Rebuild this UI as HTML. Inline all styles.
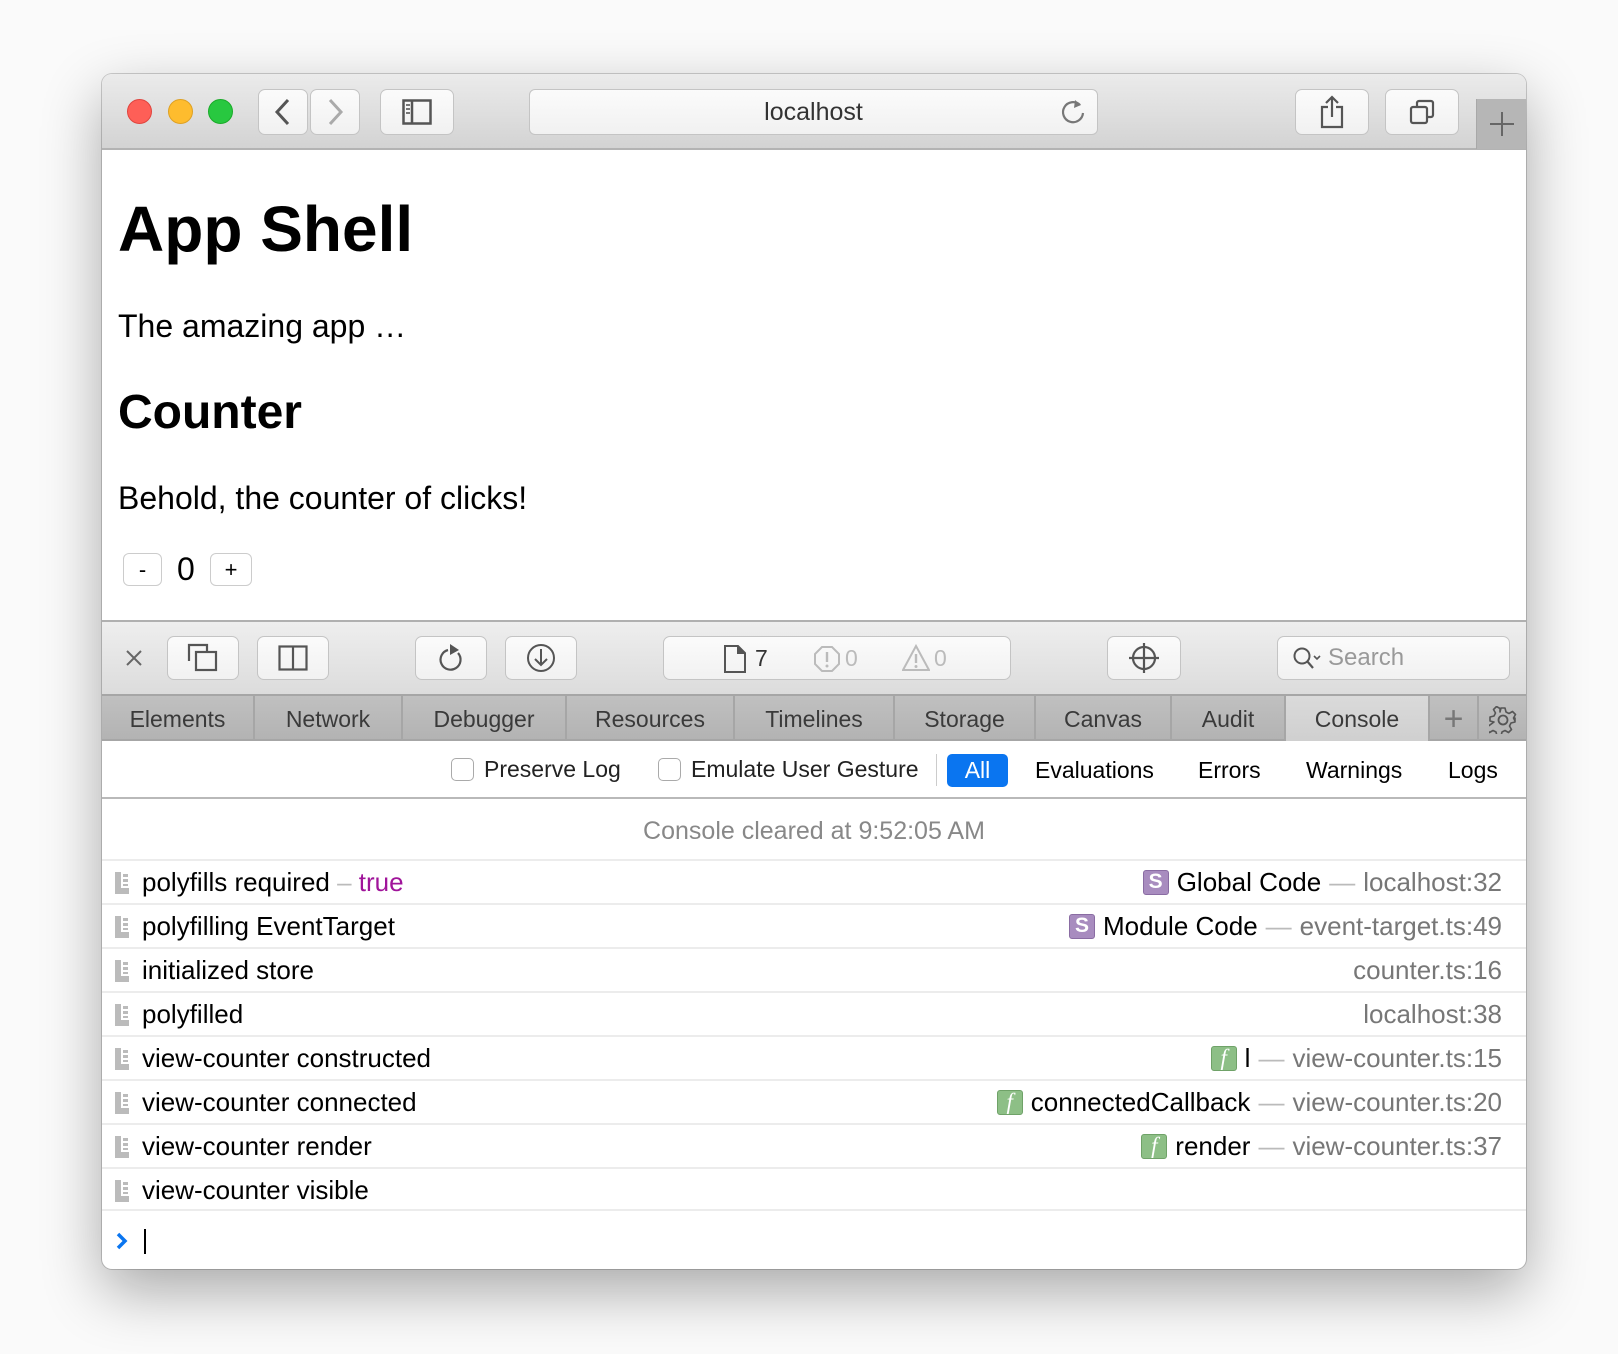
<!DOCTYPE html>
<html><head><meta charset="utf-8">
<style>
*{box-sizing:border-box;margin:0;padding:0}
body{width:1618px;height:1354px;background:#fafafa;font-family:"Liberation Sans",Arial,sans-serif;position:relative;overflow:hidden}
.a{position:absolute}
#win{left:102px;top:74px;width:1424px;height:1195px;background:#fff;border-radius:10px;box-shadow:0 22px 60px rgba(0,0,0,.33),0 0 0 1px rgba(0,0,0,.18);overflow:hidden}
.btn{position:absolute;background:linear-gradient(#fbfbfb,#f1f1f1);border:1px solid #c4c4c4;border-radius:7px;display:flex;align-items:center;justify-content:center}
.t{position:absolute;white-space:nowrap;line-height:1}
.tab{position:absolute;top:0;height:47px;display:flex;align-items:center;justify-content:center;font-size:23px;color:#3a3a3a;border-right:2px solid #a6a6a6}
.row{position:absolute;left:0;width:1424px;height:44px;border-top:2px solid #ececec;font-size:26px;color:#000}
.row .l{position:absolute;left:40px;top:0;line-height:42px}
.row .r{position:absolute;right:24px;top:0;line-height:42px;display:flex;align-items:center;gap:8px}
.row .ic{position:absolute;left:13px;top:11px}
.g{color:#777}
.dash{color:#bbb}
.bd{width:26px;height:25px;border-radius:3px;color:#fff;font-size:21px;display:inline-flex;align-items:center;justify-content:center;font-weight:bold}
.S{background:#a88cbf;border:1px solid #8a6ca3}
.F{background:#8dbf86;border:1px solid #6fa268;font-style:italic;font-family:"Liberation Serif",serif;font-weight:normal;font-size:23px}
.cb{position:absolute;width:23px;height:23px;border:1.5px solid #aaa;border-radius:5px;background:#fff}
</style></head><body>
<div id="win" class="a">
  <div class="a" style="left:0;top:0;width:1424px;height:76px;background:linear-gradient(#ebebeb,#d3d3d3);border-bottom:2px solid #b3b3b3"></div>
  <div class="a" style="left:25px;top:25px;width:25px;height:25px;border-radius:50%;background:#fe5f57;border:1px solid #e0443e"></div>
  <div class="a" style="left:66px;top:25px;width:25px;height:25px;border-radius:50%;background:#febc2e;border:1px solid #dea123"></div>
  <div class="a" style="left:106px;top:25px;width:25px;height:25px;border-radius:50%;background:#28c840;border:1px solid #1aab29"></div>
  <div class="btn" style="left:156px;top:15px;width:50px;height:46px"><svg width="20" height="30" viewBox="0 0 20 30"><path d="M15 3L4 15l11 12" fill="none" stroke="#555" stroke-width="3"/></svg></div>
  <div class="btn" style="left:208px;top:15px;width:50px;height:46px"><svg width="20" height="30" viewBox="0 0 20 30"><path d="M5 3l11 12L5 27" fill="none" stroke="#aaa" stroke-width="3"/></svg></div>
  <div class="btn" style="left:278px;top:15px;width:74px;height:46px"><svg width="30" height="26" viewBox="0 0 30 26"><rect x="1.5" y="1.5" width="27" height="23" fill="none" stroke="#555" stroke-width="2.5"/><path d="M10 1.5v23" stroke="#555" stroke-width="2.5"/><path d="M4 6h4M4 10h4M4 14h4" stroke="#777" stroke-width="2"/></svg></div>
  <div class="btn" style="left:427px;top:15px;width:569px;height:46px;border-radius:6px"><span style="font-size:25px;color:#333;margin-left:0px">localhost</span></div>
  <svg class="a" style="left:956px;top:23px" width="30" height="30" viewBox="0 0 30 30"><path d="M22 8A10 10 0 1 0 25 16" fill="none" stroke="#777" stroke-width="2.2"/><path d="M17 3l6 5-7 3z" fill="#777"/></svg>
  <div class="btn" style="left:1193px;top:15px;width:74px;height:46px"><svg width="26" height="34" viewBox="0 0 26 34"><path d="M9 12H3v20h20V12h-6" fill="none" stroke="#555" stroke-width="2.2"/><path d="M13 22V2M7 8l6-6 6 6" fill="none" stroke="#555" stroke-width="2.2"/></svg></div>
  <div class="btn" style="left:1283px;top:15px;width:74px;height:46px"><svg width="26" height="26" viewBox="0 0 26 26"><rect x="2" y="8" width="16" height="16" rx="2" fill="none" stroke="#555" stroke-width="2.2"/><path d="M8 8V4a2 2 0 0 1 2-2h12a2 2 0 0 1 2 2v12a2 2 0 0 1-2 2h-4" fill="none" stroke="#555" stroke-width="2.2"/></svg></div>
  <div class="a" style="left:1374px;top:25px;width:50px;height:50px;background:#b6b6b6;border-left:1px solid #a8a8a8"><svg width="50" height="50" viewBox="0 0 50 50"><path d="M25 13v24M13 25h24" stroke="#666" stroke-width="2"/></svg></div>

  <div class="t" style="left:16px;top:123px;font-size:64px;font-weight:bold">App Shell</div>
  <div class="t" style="left:16px;top:236px;font-size:32px">The amazing app …</div>
  <div class="t" style="left:16px;top:315px;font-size:48px;font-weight:bold">Counter</div>
  <div class="t" style="left:16px;top:408px;font-size:32px">Behold, the counter of clicks!</div>
  <div class="btn" style="left:21px;top:479px;width:39px;height:33px;border-radius:6px;font-size:22px;background:#fff;border-color:#ccc">-</div>
  <div class="t" style="left:75px;top:479px;font-size:32px;line-height:32px">0</div>
  <div class="btn" style="left:108px;top:479px;width:42px;height:33px;border-radius:6px;font-size:22px;background:#fff;border-color:#ccc">+</div>

  <div class="a" style="left:0;top:546px;width:1424px;height:74px;background:linear-gradient(#eeeeee,#dcdcdc);border-top:2px solid #b0b0b0"></div>
  <svg class="a" style="left:23px;top:575px" width="18" height="18" viewBox="0 0 18 18"><path d="M2 2l14 14M16 2L2 16" stroke="#666" stroke-width="2"/></svg>
  <div class="btn" style="left:65px;top:562px;width:72px;height:44px"><svg width="32" height="30" viewBox="0 0 32 30"><path d="M2 18V2h18v6" fill="none" stroke="#555" stroke-width="2.2"/><rect x="9" y="9" width="20" height="18" fill="none" stroke="#555" stroke-width="2.2"/></svg></div>
  <div class="btn" style="left:155px;top:562px;width:72px;height:44px"><svg width="30" height="26" viewBox="0 0 30 26"><rect x="1.5" y="1.5" width="27" height="23" fill="none" stroke="#555" stroke-width="2.2"/><path d="M15 1.5v23" stroke="#555" stroke-width="2.2"/></svg></div>
  <div class="btn" style="left:313px;top:562px;width:72px;height:44px"><svg width="30" height="32" viewBox="0 0 30 32"><path d="M22 11A10 10 0 1 1 12 8" fill="none" stroke="#555" stroke-width="2.2"/><path d="M14 2l9 6-9 5z" fill="#555"/></svg></div>
  <div class="btn" style="left:403px;top:562px;width:72px;height:44px"><svg width="30" height="30" viewBox="0 0 30 30"><circle cx="15" cy="15" r="13" fill="none" stroke="#555" stroke-width="2"/><path d="M15 6v16M9 16l6 6 6-6" fill="none" stroke="#555" stroke-width="2"/></svg></div>
  <div class="btn" style="left:561px;top:562px;width:348px;height:44px"></div>
  <svg class="a" style="left:621px;top:571px" width="24" height="28" viewBox="0 0 24 28"><path d="M2 1h13l7 7v19H2z" fill="none" stroke="#555" stroke-width="2"/><path d="M14 1v8h8z" fill="#555"/></svg>
  <div class="t" style="left:653px;top:573px;font-size:23px;color:#333">7</div>
  <svg class="a" style="left:711px;top:571px" width="28" height="28" viewBox="0 0 28 28"><path d="M9 2h10l7 7v10l-7 7H9l-7-7V9z" fill="none" stroke="#bbb" stroke-width="2"/><path d="M14 7v10" stroke="#bbb" stroke-width="2.4"/><circle cx="14" cy="21" r="1.5" fill="#bbb"/></svg>
  <div class="t" style="left:743px;top:573px;font-size:23px;color:#bbb">0</div>
  <svg class="a" style="left:800px;top:570px" width="28" height="28" viewBox="0 0 28 28"><path d="M14 2L27 26H1z" fill="none" stroke="#bbb" stroke-width="2"/><path d="M14 10v9" stroke="#bbb" stroke-width="2.4"/><circle cx="14" cy="22.5" r="1.5" fill="#bbb"/></svg>
  <div class="t" style="left:832px;top:573px;font-size:23px;color:#bbb">0</div>
  <div class="btn" style="left:1005px;top:562px;width:74px;height:44px"><svg width="32" height="32" viewBox="0 0 32 32"><circle cx="16" cy="16" r="11" fill="none" stroke="#555" stroke-width="2.2"/><path d="M16 1v30M1 16h30" stroke="#555" stroke-width="2.2"/></svg></div>
  <div class="btn" style="left:1175px;top:562px;width:233px;height:44px;justify-content:flex-start;padding-left:14px"><svg width="32" height="26" viewBox="0 0 32 26"><circle cx="10" cy="11" r="7.5" fill="none" stroke="#555" stroke-width="2"/><path d="M15 16l6 7" stroke="#555" stroke-width="2.2"/><path d="M22 11l3 3 3-3" fill="none" stroke="#555" stroke-width="1.6"/></svg><span style="font-size:24px;color:#999;margin-left:4px">Search</span></div>

  <div class="a" style="left:0;top:620px;width:1424px;height:47px;background:linear-gradient(#c0c0c0,#b3b3b3);border-top:2px solid #a6a6a6;border-bottom:2px solid #a6a6a6">
    <div class="tab" style="left:0;width:153px">Elements</div>
    <div class="tab" style="left:153px;width:148px">Network</div>
    <div class="tab" style="left:301px;width:164px">Debugger</div>
    <div class="tab" style="left:465px;width:168px">Resources</div>
    <div class="tab" style="left:633px;width:160px">Timelines</div>
    <div class="tab" style="left:793px;width:141px">Storage</div>
    <div class="tab" style="left:934px;width:136px">Canvas</div>
    <div class="tab" style="left:1070px;width:114px">Audit</div>
    <div class="tab" style="left:1184px;width:144px;background:linear-gradient(#dadada,#cfcfcf)">Console</div>
    <div class="tab" style="left:1328px;width:49px;font-size:34px;color:#777;font-weight:300">+</div>
    <div class="tab" style="left:1377px;width:47px;border:none"><svg width="28" height="28" viewBox="0 0 28 28"><path d="M12 2h4l1 4 3 1.5 3.5-2 3 3-2 3.5L26 15l0 0v-3 4l-4 1-1.5 3 2 3.5-3 3-3.5-2-3 1.5-1 4h-4l-1-4-3-1.5-3.5 2-3-3 2-3.5L5 16l-4-1v-4l4-1 1.5-3-2-3.5 3-3 3.5 2L11 6z" fill="none" stroke="#555" stroke-width="1.6" stroke-linejoin="round"/><circle cx="14" cy="14" r="4.5" fill="none" stroke="#555" stroke-width="1.8"/></svg></div>
  </div>

  <div class="a" style="left:0;top:667px;width:1424px;height:58px;border-bottom:2px solid #b9b9b9;background:#fff"></div>
  <div class="cb" style="left:349px;top:684px"></div>
  <div class="t" style="left:382px;top:684px;font-size:23px;color:#222">Preserve Log</div>
  <div class="cb" style="left:556px;top:684px"></div>
  <div class="t" style="left:589px;top:684px;font-size:23px;color:#222">Emulate User Gesture</div>
  <div class="a" style="left:834px;top:680px;width:1px;height:32px;background:#ccc"></div>
  <div class="a" style="left:845px;top:680px;width:61px;height:33px;background:#0a75f0;border-radius:5px;color:#fff;font-size:23px;display:flex;align-items:center;justify-content:center">All</div>
  <div class="t" style="left:933px;top:685px;font-size:23px">Evaluations</div>
  <div class="t" style="left:1096px;top:685px;font-size:23px">Errors</div>
  <div class="t" style="left:1204px;top:685px;font-size:23px">Warnings</div>
  <div class="t" style="left:1346px;top:685px;font-size:23px">Logs</div>

  <div class="t" style="left:0;width:1424px;text-align:center;top:745px;font-size:25px;color:#888">Console cleared at 9:52:05 AM</div>

  <div class="row" style="top:785px"><svg class="ic" width="14" height="22" viewBox="0 0 14 22"><path d="M0 0h6v16h8v6H0z" fill="#bbb"/><path d="M8 2h5v3H8zM8 7h5v3H8zM8 12h5v2H8z" fill="#bbb"/></svg><span class="l">polyfills required <span class="dash">–</span> <span style="color:#a0149a">true</span></span><span class="r"><span class="bd S">S</span><span>Global Code</span><span class="dash">—</span><span class="g">localhost:32</span></span></div>
  <div class="row" style="top:829px"><svg class="ic" width="14" height="22" viewBox="0 0 14 22"><path d="M0 0h6v16h8v6H0z" fill="#bbb"/><path d="M8 2h5v3H8zM8 7h5v3H8zM8 12h5v2H8z" fill="#bbb"/></svg><span class="l">polyfilling EventTarget</span><span class="r"><span class="bd S">S</span><span>Module Code</span><span class="dash">—</span><span class="g">event-target.ts:49</span></span></div>
  <div class="row" style="top:873px"><svg class="ic" width="14" height="22" viewBox="0 0 14 22"><path d="M0 0h6v16h8v6H0z" fill="#bbb"/><path d="M8 2h5v3H8zM8 7h5v3H8zM8 12h5v2H8z" fill="#bbb"/></svg><span class="l">initialized store</span><span class="r"><span class="g">counter.ts:16</span></span></div>
  <div class="row" style="top:917px"><svg class="ic" width="14" height="22" viewBox="0 0 14 22"><path d="M0 0h6v16h8v6H0z" fill="#bbb"/><path d="M8 2h5v3H8zM8 7h5v3H8zM8 12h5v2H8z" fill="#bbb"/></svg><span class="l">polyfilled</span><span class="r"><span class="g">localhost:38</span></span></div>
  <div class="row" style="top:961px"><svg class="ic" width="14" height="22" viewBox="0 0 14 22"><path d="M0 0h6v16h8v6H0z" fill="#bbb"/><path d="M8 2h5v3H8zM8 7h5v3H8zM8 12h5v2H8z" fill="#bbb"/></svg><span class="l">view-counter constructed</span><span class="r"><span class="bd F">f</span><span>l</span><span class="dash">—</span><span class="g">view-counter.ts:15</span></span></div>
  <div class="row" style="top:1005px"><svg class="ic" width="14" height="22" viewBox="0 0 14 22"><path d="M0 0h6v16h8v6H0z" fill="#bbb"/><path d="M8 2h5v3H8zM8 7h5v3H8zM8 12h5v2H8z" fill="#bbb"/></svg><span class="l">view-counter connected</span><span class="r"><span class="bd F">f</span><span>connectedCallback</span><span class="dash">—</span><span class="g">view-counter.ts:20</span></span></div>
  <div class="row" style="top:1049px"><svg class="ic" width="14" height="22" viewBox="0 0 14 22"><path d="M0 0h6v16h8v6H0z" fill="#bbb"/><path d="M8 2h5v3H8zM8 7h5v3H8zM8 12h5v2H8z" fill="#bbb"/></svg><span class="l">view-counter render</span><span class="r"><span class="bd F">f</span><span>render</span><span class="dash">—</span><span class="g">view-counter.ts:37</span></span></div>
  <div class="row" style="top:1093px;border-bottom:2px solid #ececec"><svg class="ic" width="14" height="22" viewBox="0 0 14 22"><path d="M0 0h6v16h8v6H0z" fill="#bbb"/><path d="M8 2h5v3H8zM8 7h5v3H8zM8 12h5v2H8z" fill="#bbb"/></svg><span class="l">view-counter visible</span></div>

  <svg class="a" style="left:13px;top:1157px" width="14" height="20" viewBox="0 0 14 20"><path d="M3 3l7 7-7 7" fill="none" stroke="#0a75f0" stroke-width="3.5"/></svg>
  <div class="a" style="left:42px;top:1155px;width:2px;height:25px;background:#000"></div>
</div>
</body></html>
